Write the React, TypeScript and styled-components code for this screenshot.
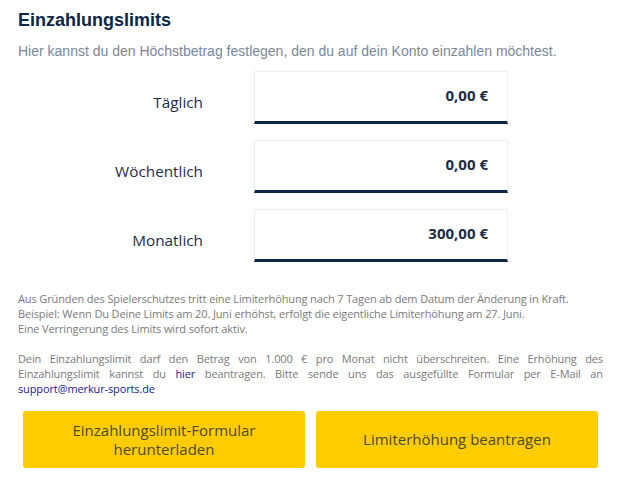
import React from "react";
import styled, { createGlobalStyle } from "styled-components";

const Global = createGlobalStyle`
  html, body { margin: 0; padding: 0; background: #fff; }
  * { box-sizing: border-box; }
`;

const Page = styled.div`
  width: 620px;
  padding: 8px 17px 0 18px;
  font-family: "Liberation Sans", Arial, sans-serif;
`;

const Title = styled.h1`
  margin: 0;
  font-size: 18px;
  line-height: 24px;
  font-weight: 700;
  color: #0c2646;
`;

const Subtitle = styled.p`
  margin: 10px 0 0;
  font-size: 14px;
  line-height: 18px;
  color: #7b8896;
`;

const Form = styled.div`
  display: grid;
  grid-template-columns: 185px 254px;
  column-gap: 51px;
  row-gap: 16px;
  margin-top: 11px;
`;

const Label = styled.div`
  font-family: "Open Sans", sans-serif;
  font-size: 15.3px;
  color: #1d2c45;
  text-align: right;
  padding-top: 21px;
`;

const Field = styled.div`
  height: 53px;
  border: 1px solid #eeeeee;
  border-bottom: 3px solid #0c2646;
  display: flex;
  align-items: center;
  justify-content: flex-end;
  padding: 0 19px 4px 0;
  font-family: "Open Sans", sans-serif;
  font-weight: 700;
  font-size: 15px;
  color: #1d2c45;
`;

const Notes = styled.div`
  margin-top: 29px;
  font-family: "Open Sans", sans-serif;
  font-size: 11px;
  line-height: 15px;
  letter-spacing: -0.12px;
  color: #7a7a7a;
`;

const Para = styled.p<{ $justify?: boolean }>`
  margin: 0 0 15px;
  text-align: ${(p) => (p.$justify ? "justify" : "left")};
`;

const Line = styled.span``;

const Link = styled.a`
  color: #1a1a8c;
  text-decoration: none;
`;

const Buttons = styled.div`
  display: grid;
  grid-template-columns: 1fr 1fr;
  gap: 11px;
  margin: 9px 5px 0;
`;

const Button = styled.button`
  height: 57px;
  border: none;
  border-radius: 3px;
  background: #ffcc00;
  color: #4d4a3a;
  font-family: "Open Sans", sans-serif;
  font-size: 15px;
  line-height: 19px;
  padding: 0 40px;
  cursor: pointer;
`;

const rows = [
  { label: "Täglich", value: "0,00 €" },
  { label: "Wöchentlich", value: "0,00 €" },
  { label: "Monatlich", value: "300,00 €" },
];

export default function App() {
  return (
    <Page>
      <Global />
      <Title>Einzahlungslimits</Title>
      <Subtitle>
        Hier kannst du den Höchstbetrag festlegen, den du auf dein Konto einzahlen möchtest.
      </Subtitle>
      <Form>
        {rows.map((r) => (
          <React.Fragment key={r.label}>
            <Label>{r.label}</Label>
            <Field>{r.value}</Field>
          </React.Fragment>
        ))}
      </Form>
      <Notes>
        <Para>
          Aus Gründen des Spielerschutzes tritt eine Limiterhöhung nach 7 Tagen ab dem Datum der Änderung in Kraft.
          <br />
          Beispiel: Wenn Du Deine Limits am 20. Juni erhöhst, erfolgt die eigentliche Limiterhöhung am 27. Juni.
          <br />
          Eine Verringerung des Limits wird sofort aktiv.
        </Para>
        <Para $justify>
          <Line>
            Dein Einzahlungslimit darf den Betrag von 1.000 € pro Monat nicht überschreiten. Eine Erhöhung des{" "}
          </Line>
          <Line>Einzahlungslimit kannst du </Line>
          <Link href="#">hier</Link>
          <Line> beantragen. Bitte sende uns das ausgefüllte Formular per E-Mail an </Line>
          <Link href="#">support@merkur-sports.de</Link>
        </Para>
      </Notes>
      <Buttons>
        <Button>Einzahlungslimit-Formular herunterladen</Button>
        <Button>Limiterhöhung beantragen</Button>
      </Buttons>
    </Page>
  );
}
